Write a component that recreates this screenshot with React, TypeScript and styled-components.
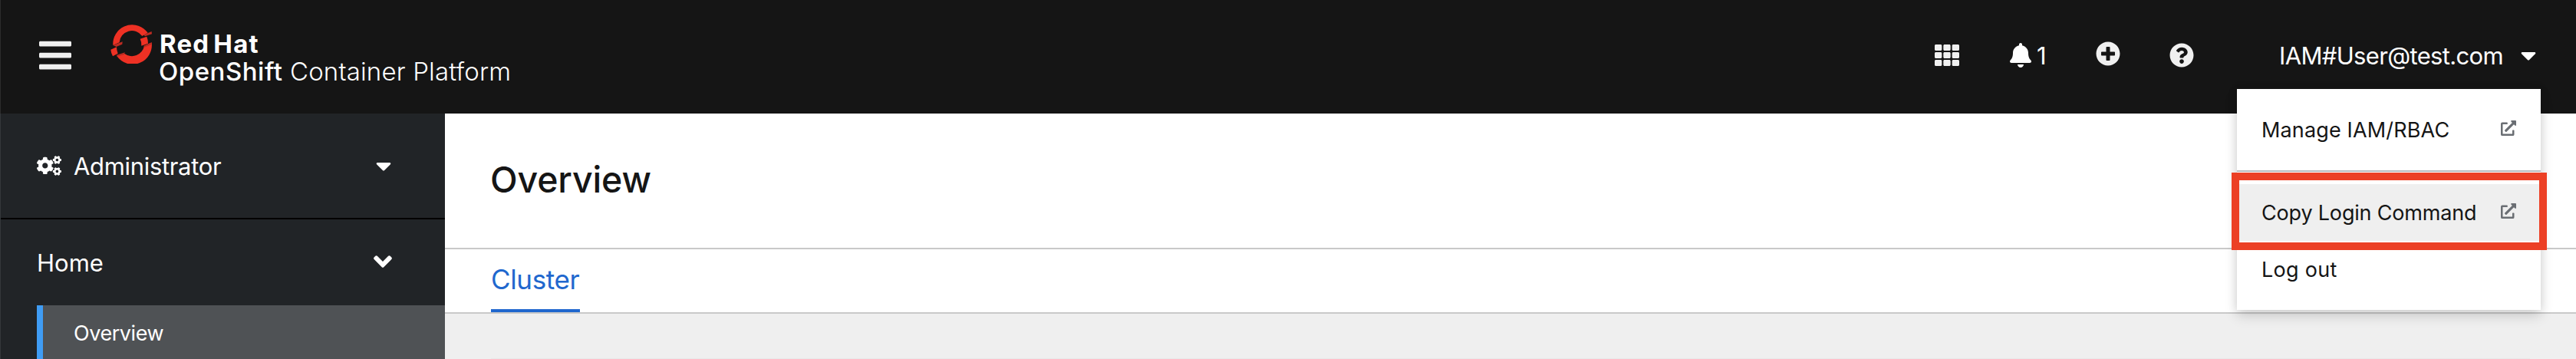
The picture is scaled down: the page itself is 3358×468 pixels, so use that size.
import React from 'react';
import styled, { createGlobalStyle } from 'styled-components';
import {
  FaAngleDown,
  FaBars,
  FaBell,
  FaCaretDown,
  FaCogs,
  FaExternalLinkAlt,
  FaPlusCircle,
  FaQuestionCircle,
  FaTh,
} from 'react-icons/fa';

const GlobalStyle = createGlobalStyle`
  * { box-sizing: border-box; }
  body { margin: 0; background: #efefef; overflow: hidden; }
  svg { display: block; flex: none; }
`;

const Page = styled.div`
  position: relative;
  display: flex;
  flex-direction: column;
  width: 3358px;
  height: 468px;
  overflow: hidden;
  font-family: Inter, "Liberation Sans", sans-serif;
  color: #151515;
`;

const Label = styled.span<{ $size: number; $spacing?: number; $weight?: number }>`
  font-size: ${(p) => p.$size}px;
  font-weight: ${(p) => p.$weight ?? 400};
  letter-spacing: ${(p) => p.$spacing ?? 0}px;
  white-space: nowrap;
`;

const Masthead = styled.header`
  flex: none;
  display: flex;
  align-items: center;
  height: 148px;
  padding: 0 52px 4px 50px;
  background: #151515;
  border-left: 1px solid #2c2c2c;
  color: #fff;
`;

const MenuToggle = styled.button`
  padding: 0;
  border: 0;
  background: none;
  color: #f0f0f0;
  svg { width: 42px; height: 48px; }
`;

const Brand = styled.div`
  display: flex;
  align-items: flex-start;
  height: 82px;
  margin-left: 50px;
`;

const BrandName = styled.div`
  display: flex;
  flex-direction: column;
  margin: 8px 0 0 8px;
  line-height: 36px;
`;

const BrandTop = styled(Label)`
  word-spacing: -4px;
  margin-left: 1px;
`;

const Toolbar = styled.div`
  display: flex;
  align-items: center;
  margin-left: auto;
  color: #f0f0f0;
`;

const IconButton = styled.button<{ $gap: number; $lift?: number }>`
  display: flex;
  align-items: center;
  padding: 0;
  margin: 0 ${(p) => p.$gap}px ${(p) => p.$lift ?? 0}px 0;
  border: 0;
  background: none;
  color: inherit;
  font-size: 32px;
`;

const Notifications = styled(IconButton)`
  width: 49px;
  color: #fff;
  font-family: inherit;
  svg { width: 28px; height: 32px; }
  span { margin: 2px 0 0 7px; line-height: 34px; }
`;

const UserToggle = styled.button`
  display: flex;
  align-items: center;
  justify-content: space-between;
  width: 335px;
  padding: 0;
  border: 0;
  background: none;
  color: #fff;
  font-family: inherit;
  line-height: 34px;
  svg { width: 20px; height: 32px; }
  span { margin-top: 2px; }
`;

const Body = styled.div`
  flex: 1;
  display: flex;
  min-height: 0;
`;

const Sidebar = styled.nav`
  flex: none;
  width: 580px;
  background: #212427;
  border-left: 1px solid #34373a;
  color: #fff;
`;

const Perspective = styled.div`
  display: flex;
  align-items: center;
  height: 138px;
  padding: 0 70px 0 47px;
  border-bottom: 2px solid #030303;
  line-height: 36px;
  span { margin: 2px 0 0 16px; }
  .caret { width: 20px; height: 32px; margin-left: auto; }
`;

const NavSection = styled.div`
  display: flex;
  align-items: center;
  justify-content: space-between;
  height: 112px;
  padding: 0 69px 0 47px;
  line-height: 36px;
  span { margin-top: 2px; }
  svg { width: 24px; height: 38px; margin-bottom: 3px; }
`;

const NavItem = styled.div`
  height: 70px;
  margin-left: 47px;
  padding: 19px 0 0 40px;
  background: #4f5255;
  border-left: 8px solid #3f9cf4;
  line-height: 36px;
`;

const Content = styled.main`
  flex: 1;
  display: flex;
  flex-direction: column;
  background: #fff;
`;

const TitleBar = styled.div`
  height: 177px;
  padding: 58px 0 0 59px;
  border-bottom: 2px solid #c9c9c9;
`;

const Title = styled.h1`
  margin: 0;
  font-size: 46.5px;
  font-weight: 500;
  letter-spacing: -0.15px;
  line-height: 56px;
`;

const Tabs = styled.div`
  display: flex;
  height: 84px;
  padding-left: 60px;
  border-bottom: 2px solid #c9c9c9;
`;

const Tab = styled.div`
  width: 116px;
  height: 82px;
  padding-top: 19px;
  border-bottom: 4px solid #2067ce;
  color: #2067ce;
  line-height: 40px;
`;

const Dashboard = styled.div`
  flex: 1;
  display: flex;
  flex-direction: column;
  justify-content: flex-end;
  padding: 0 60px;
  background: #efefef;
`;

const CardEdge = styled.div`
  height: 1px;
  background: #e8e8e8;
`;

const Dropdown = styled.div`
  position: absolute;
  left: 2916px;
  top: 116px;
  width: 396px;
  height: 288px;
  background: #fff;
  box-shadow: 0 8px 16px rgba(3, 3, 3, 0.14), 0 0 12px rgba(3, 3, 3, 0.1);
`;

const DropdownItem = styled.div<{ $active?: boolean }>`
  display: flex;
  align-items: center;
  justify-content: space-between;
  height: 74px;
  padding: 0 32px;
  background: ${(p) => (p.$active ? '#efefef' : 'transparent')};
  line-height: 36px;
  span { margin-top: 1px; }
  svg { width: 20px; height: 20px; margin-bottom: 4px; color: #6a6e73; }
`;

const FirstItem = styled(DropdownItem)`
  height: 108px;
  padding-top: 16px;
  padding-bottom: 16px;
  margin-bottom: 16px;
  border-bottom: 2px solid #b8bbbe;
`;

const Highlight = styled.div`
  position: absolute;
  left: 2909px;
  top: 225px;
  width: 411px;
  height: 101px;
  border: 10px solid #ec4025;
`;

const OpenShiftMark = () => (
  <svg width="56" height="52" viewBox="39 33 168 156">
    <g fill="#ee3124">
      <path d="M52 117A75 75 0 0 1 180 59L188 68L166 81A49 49 0 0 0 77 106Z" />
      <path d="M158 92L184 83Q189 95 189 110L163 119Q164 104 158 92Z" />
      <path d="M203 106A75 75 0 0 1 67 159L97 150A49 49 0 0 0 174 120Z" />
      <path d="M43 134L66 124Q66 137 71 149L51 160Q44 147 43 134Z" />
    </g>
    <g fill="#bd2b22">
      <path d="M172 76L203 63L204 73L177 82Z" />
      <path d="M172 119L203 106L201 115L174 125Z" />
      <path d="M52 117L89 103L88 113L65 123Z" />
      <path d="M66 155L99 145L94 154L68 161Z" />
    </g>
  </svg>
);

export default function App() {
  return (
    <Page>
      <GlobalStyle />
      <Masthead>
        <MenuToggle aria-label="Menu"><FaBars /></MenuToggle>
        <Brand>
          <OpenShiftMark />
          <BrandName>
            <BrandTop $size={33} $weight={700} $spacing={1.2}>Red Hat</BrandTop>
            <div>
              <Label $size={33} $weight={500} $spacing={0.5}>OpenShift</Label>
              <Label $size={33} $weight={300} $spacing={0.17}> Container Platform</Label>
            </div>
          </BrandName>
        </Brand>
        <Toolbar>
          <IconButton $gap={66} aria-label="Applications"><FaTh /></IconButton>
          <Notifications $gap={63}>
            <FaBell />
            <Label $size={31}>1</Label>
          </Notifications>
          <IconButton $gap={64} $lift={4} aria-label="Add"><FaPlusCircle /></IconButton>
          <IconButton $gap={111} aria-label="Help"><FaQuestionCircle /></IconButton>
          <UserToggle>
            <Label $size={31} $spacing={-0.66}>IAM#User@test.com</Label>
            <FaCaretDown />
          </UserToggle>
        </Toolbar>
      </Masthead>
      <Body>
        <Sidebar>
          <Perspective>
            <FaCogs size={32} />
            <Label $size={31} $spacing={-0.33}>Administrator</Label>
            <FaCaretDown className="caret" />
          </Perspective>
          <NavSection>
            <Label $size={31}>Home</Label>
            <FaAngleDown />
          </NavSection>
          <NavItem>
            <Label $size={27} $spacing={-0.45}>Overview</Label>
          </NavItem>
        </Sidebar>
        <Content>
          <TitleBar><Title>Overview</Title></TitleBar>
          <Tabs>
            <Tab><Label $size={35} $spacing={-0.36}>Cluster</Label></Tab>
          </Tabs>
          <Dashboard><CardEdge /></Dashboard>
        </Content>
      </Body>
      <Dropdown>
        <FirstItem>
          <Label $size={27} $spacing={0.15}>Manage IAM/RBAC</Label>
          <FaExternalLinkAlt />
        </FirstItem>
        <DropdownItem $active>
          <Label $size={27} $spacing={-0.18}>Copy Login Command</Label>
          <FaExternalLinkAlt />
        </DropdownItem>
        <DropdownItem>
          <Label $size={27} $spacing={0.28}>Log out</Label>
        </DropdownItem>
      </Dropdown>
      <Highlight />
    </Page>
  );
}
